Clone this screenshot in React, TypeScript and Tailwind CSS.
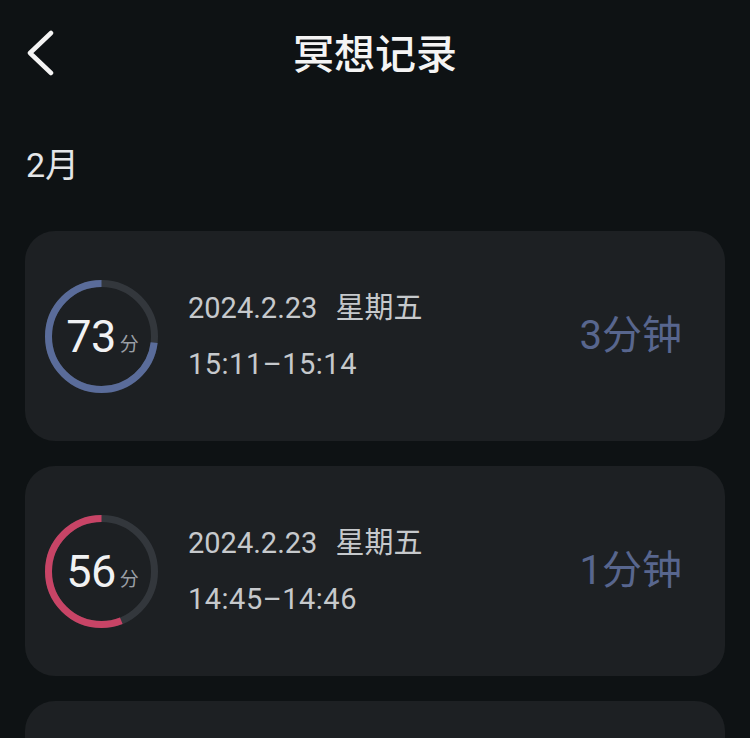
import React from 'react'

type Session = {
  score: number
  date: string
  weekday: string
  time: string
  minutes: number
  color: string
}

const sessions: Session[] = [
  { score: 73, date: '2024.2.23', weekday: '星期五', time: '15:11–15:14', minutes: 3, color: '#5a6c9a' },
  { score: 56, date: '2024.2.23', weekday: '星期五', time: '14:45–14:46', minutes: 1, color: '#c84466' },
]

const FONT = "font-['Roboto','Noto_Sans_CJK_SC',sans-serif]"

// ring progress runs counter-clockwise from 12 o'clock
const ScoreRing = ({ score, color }: { score: number; color: string }) => {
  const size = 113
  const r = 53
  const c = size / 2
  const len = 2 * Math.PI * r
  return (
    <div className="relative w-[113px] h-[113px] shrink-0">
      <svg width={size} height={size} className="absolute inset-0">
        <circle cx={c} cy={c} r={r} fill="none" stroke="#33373c" strokeWidth={7} />
        <circle
          cx={c}
          cy={c}
          r={r}
          fill="none"
          stroke={color}
          strokeWidth={7}
          strokeDasharray={`${(len * score) / 100} ${len}`}
          transform={`rotate(90 ${c} ${c}) translate(${size} 0) scale(-1 1)`}
        />
      </svg>
      <div className="absolute inset-0 flex items-center justify-center pl-[2px]">
        <span className="text-[45px] leading-none text-[#f1f2f3] tracking-[-0.5px]">{score}</span>
        <span className="text-[19px] leading-none text-[#9a9fa5] ml-[4px] mt-[16px]">分</span>
      </div>
    </div>
  )
}

const SessionCard = ({ s }: { s: Session }) => (
  <div className="h-[210px] rounded-[30px] bg-[#1d2023] flex items-center pl-[20px] pr-[43px]">
    <ScoreRing score={s.score} color={s.color} />
    <div className="ml-[30px] flex flex-col text-[29px] leading-[56px] text-[#c6c9cc]">
      <div className="flex">
        <span>{s.date}</span>
        <span className="ml-[18px]">{s.weekday}</span>
      </div>
      <div className="tracking-[0.5px]">{s.time}</div>
    </div>
    <div className="ml-auto text-[40px] leading-none text-[#58668e]">{s.minutes}分钟</div>
  </div>
)

export default function App() {
  return (
    <div className={`min-h-screen bg-[#0e1214] ${FONT}`}>
      <header className="h-[108px] grid grid-cols-[1fr_auto_1fr] items-center">
        <div className="pl-[25px] pb-[2px]">
          <svg width="30" height="46" viewBox="0 0 30 46" fill="none">
            <polyline points="26,3 5,23 26,43" stroke="#f4f4f4" strokeWidth="4.5" strokeLinecap="round" strokeLinejoin="round" />
          </svg>
        </div>
        <h1 className="text-[41px] font-medium text-[#f4f4f4] leading-none pt-[2px]">冥想记录</h1>
        <div />
      </header>

      <div className="pl-[26px] pt-[40px] pb-[49px] text-[34px] leading-none text-[#e4e6e8]">2月</div>

      <div className="px-[25px] flex flex-col gap-[25px]">
        {sessions.map((s, i) => (
          <SessionCard key={i} s={s} />
        ))}
        <div className="h-[210px] rounded-[30px] bg-[#1d2023]" />
      </div>
    </div>
  )
}
